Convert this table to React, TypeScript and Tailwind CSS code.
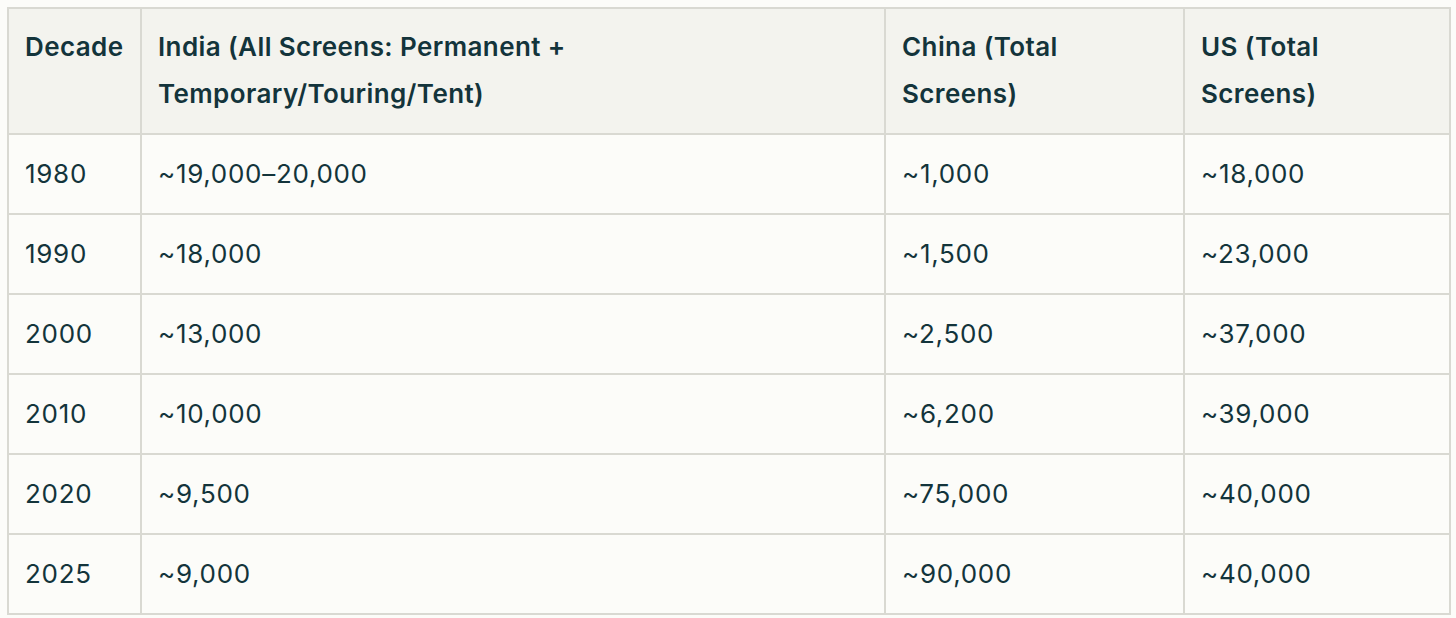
import React from "react";

const rows = [
  ["1980", "~19,000–20,000", "~1,000", "~18,000"],
  ["1990", "~18,000", "~1,500", "~23,000"],
  ["2000", "~13,000", "~2,500", "~37,000"],
  ["2010", "~10,000", "~6,200", "~39,000"],
  ["2020", "~9,500", "~75,000", "~40,000"],
  ["2025", "~9,000", "~90,000", "~40,000"],
];

const headers: string[][] = [
  ["Decade"],
  ["India (All Screens: Permanent +", "Temporary/Touring/Tent)"],
  ["China (Total", "Screens)"],
  ["US (Total", "Screens)"],
];

export default function App() {
  return (
    <div
      className="min-h-[618px] w-[1456px] bg-[#fcfcf9] pl-[7px] pt-[7px] text-[#13343b]"
      style={{ fontFamily: "Inter, 'Liberation Sans', sans-serif" }}
    >
      <table className="w-[1442px] table-fixed border-collapse border-2 border-[#d9d9d2] text-[26px]">
        <colgroup>
          <col className="w-[133px]" />
          <col className="w-[744px]" />
          <col className="w-[299px]" />
          <col className="w-[266px]" />
        </colgroup>
        <thead>
          <tr className="h-[126px] bg-[#f3f3ee]">
            {headers.map((h, i) => (
              <th
                key={i}
                className="border-2 border-[#d9d9d2] px-[16px] pt-[14px] pb-[16px] text-left align-top font-semibold leading-[47px] tracking-[0.4px] whitespace-nowrap"
              >
                {h.map((line, li) => (
                  <div key={li}>{line}</div>
                ))}
              </th>
            ))}
          </tr>
        </thead>
        <tbody>
          {rows.map((r, ri) => (
            <tr key={ri} className="h-[80px]">
              {r.map((c, ci) => (
                <td key={ci} className="border-2 border-[#d9d9d2] px-[16px] align-middle font-normal leading-[40px] tracking-[0.7px]">
                  {c}
                </td>
              ))}
            </tr>
          ))}
        </tbody>
      </table>
    </div>
  );
}
